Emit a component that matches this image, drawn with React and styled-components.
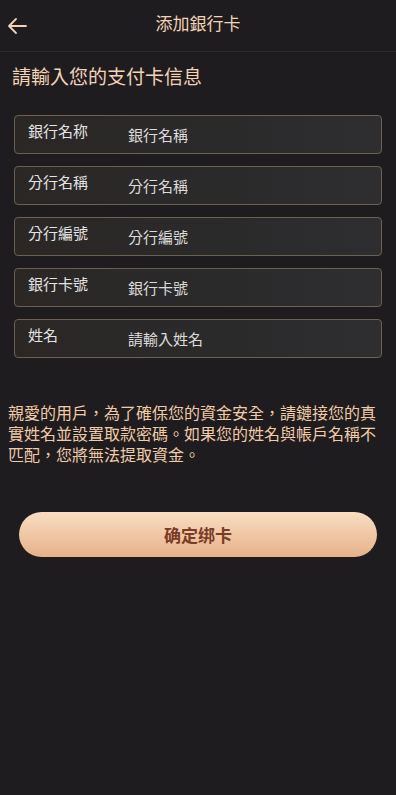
import React from 'react';
import styled, { createGlobalStyle } from 'styled-components';

const GlobalStyle = createGlobalStyle`
  html, body {
    margin: 0;
    padding: 0;
    background-color: #1f1c1f;
  }
  body {
    font-family: "Noto Sans CJK TC", "Noto Sans", "Liberation Sans", sans-serif;
  }
  * {
    box-sizing: border-box;
  }
`;

const Page = styled.div`
  min-height: 795px;
  background-color: #1f1c1f;
  display: flex;
  flex-direction: column;
`;

const Header = styled.header`
  height: 52px;
  display: grid;
  grid-template-columns: 60px 1fr 60px;
  align-items: center;
  border-bottom: 1px solid #2f2c2f;
`;

const BackButton = styled.button`
  background: none;
  border: none;
  padding: 0 0 0 6px;
  display: flex;
  align-items: center;
  cursor: pointer;
  height: 100%;
`;

const Title = styled.h1`
  margin: 0;
  text-align: center;
  font-size: 17px;
  font-weight: 400;
  color: #f2d3b5;
  line-height: 22px;
  margin-top: -5px;
`;

const Subtitle = styled.h2`
  margin: 0;
  padding: 12px 12px 0;
  font-size: 19px;
  font-weight: 400;
  line-height: 24px;
  color: #f3d4b5;
`;

const FieldList = styled.div`
  display: flex;
  flex-direction: column;
  gap: 12px;
  padding: 27px 14px 0;
`;

const Field = styled.label`
  height: 39px;
  display: flex;
  align-items: center;
  padding: 0 13px;
  border: 1px solid #6b6150;
  border-radius: 4px;
  background: linear-gradient(90deg, #2a2725 0%, #2b2a2b 60%, #2e2e31 100%);
`;

const FieldLabel = styled.span`
  width: 100px;
  flex-shrink: 0;
  align-self: flex-start;
  padding-top: 5px;
  font-size: 15px;
  line-height: 20px;
  color: #e4e4e4;
`;

const FieldInput = styled.input`
  flex: 1;
  min-width: 0;
  background: transparent;
  border: none;
  outline: none;
  padding: 1px 0 0;
  font-family: inherit;
  font-size: 15px;
  line-height: 20px;
  color: #e0e0e0;

  &::placeholder {
    color: #dcdcdc;
    opacity: 1;
  }
`;

const Notice = styled.p`
  margin: 44px 0 0;
  padding: 0 8px;
  font-size: 16px;
  line-height: 21px;
  color: #f0cba8;
`;

const SubmitButton = styled.button`
  margin: 47px 19px 0;
  height: 45px;
  border: none;
  border-radius: 23px;
  background: linear-gradient(180deg, #f9ddc3 0%, #efc5a2 55%, #e6b18b 100%);
  font-family: inherit;
  font-size: 17px;
  font-weight: 700;
  color: #7a3b27;
  cursor: pointer;
`;

const fields = [
  { label: '銀行名称', placeholder: '銀行名稱' },
  { label: '分行名稱', placeholder: '分行名稱' },
  { label: '分行編號', placeholder: '分行編號' },
  { label: '銀行卡號', placeholder: '銀行卡號' },
  { label: '姓名', placeholder: '請輸入姓名' },
];

const BackArrow = () => (
  <svg width="22" height="18" viewBox="0 0 22 18" fill="none">
    <path
      d="M20 9H3M10 2L3 9l7 7"
      stroke="#f2d3b5"
      strokeWidth="1.8"
      strokeLinecap="round"
      strokeLinejoin="round"
    />
  </svg>
);

const App = () => (
  <Page>
    <GlobalStyle />
    <Header>
      <BackButton aria-label="back">
        <BackArrow />
      </BackButton>
      <Title>添加銀行卡</Title>
      <span />
    </Header>

    <Subtitle>請輸入您的支付卡信息</Subtitle>

    <FieldList>
      {fields.map((f) => (
        <Field key={f.label}>
          <FieldLabel>{f.label}</FieldLabel>
          <FieldInput type="text" placeholder={f.placeholder} />
        </Field>
      ))}
    </FieldList>

    <Notice>
      親愛的用戶，為了確保您的資金安全，請鏈接您的真實姓名並設置取款密碼。如果您的姓名與帳戶名稱不匹配，您將無法提取資金。
    </Notice>

    <SubmitButton type="button">确定绑卡</SubmitButton>
  </Page>
);

export default App;
